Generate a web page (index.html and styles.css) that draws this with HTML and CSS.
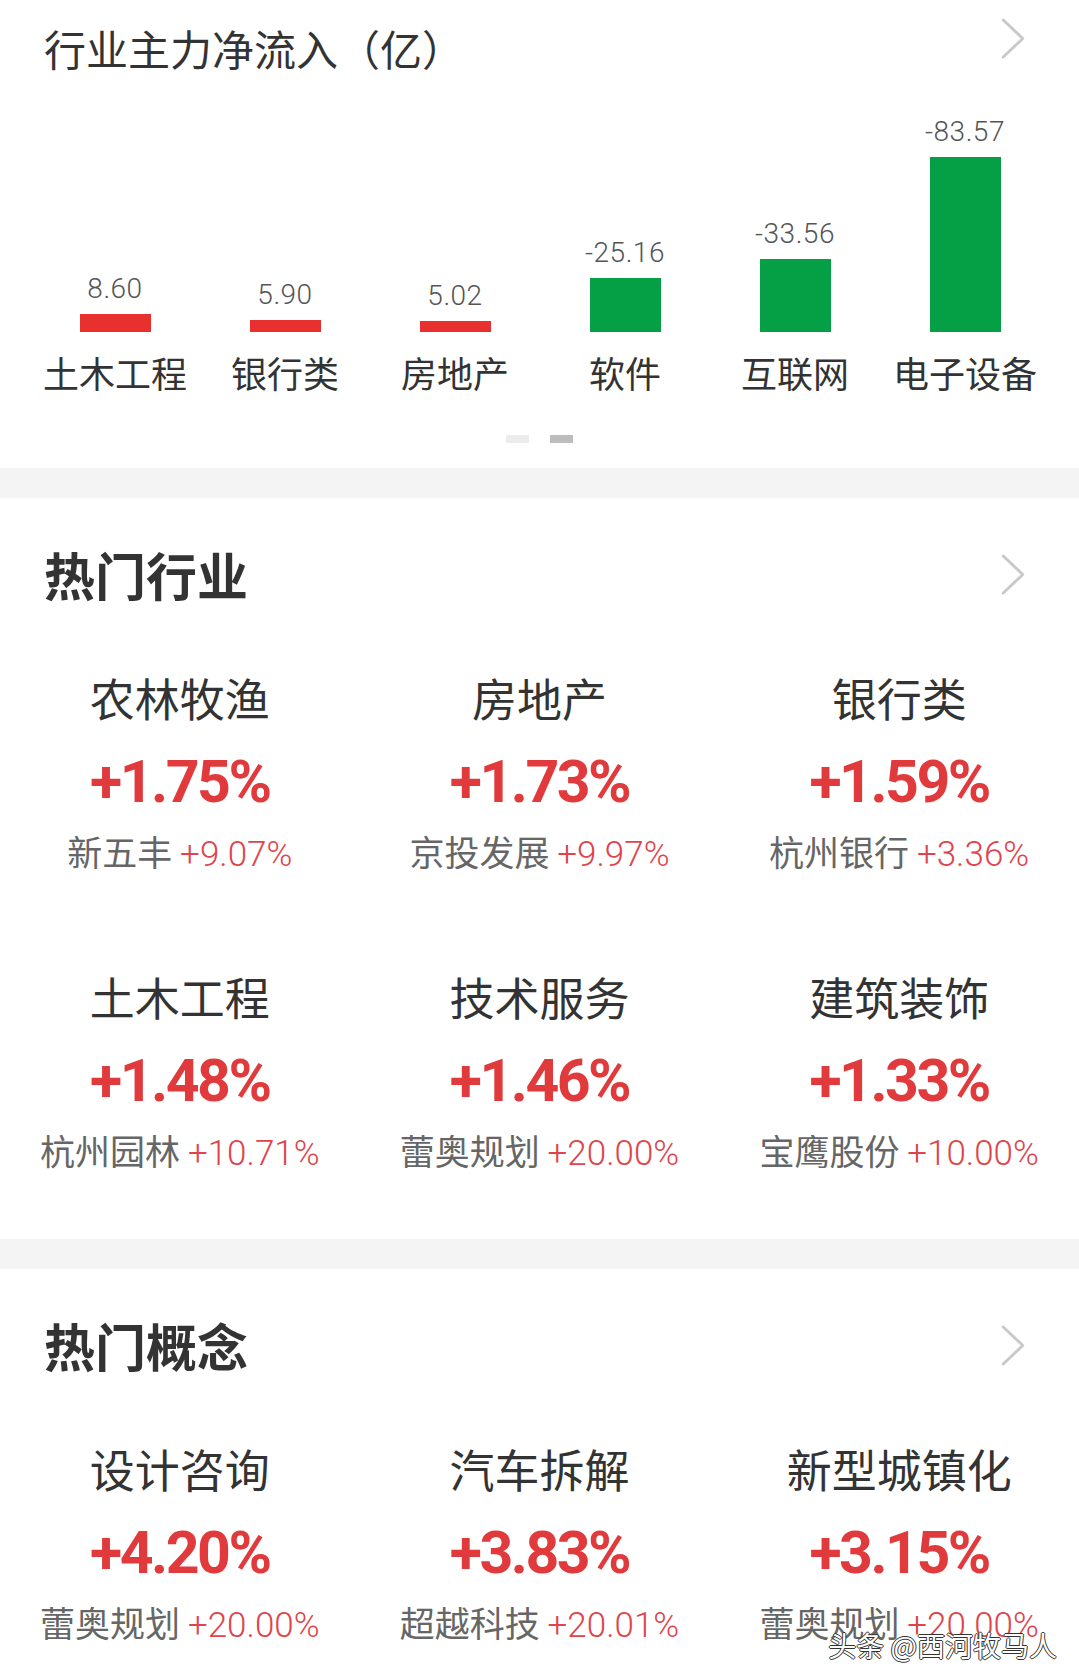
FILE: index.html
```html
<!DOCTYPE html>
<html lang="zh-CN">
<head>
    <meta charset="UTF-8">
    <meta name="viewport" content="width=device-width, initial-scale=1.0">
    <title>行业资金</title>
    <link rel="stylesheet" href="styles.css">
</head>
<body>

    <section class="card flow">
        <div class="card-head">
            <h2 class="flow-title">行业主力净流入（亿）</h2>
            <svg class="more" viewBox="0 0 24 42"><polyline points="2,2 22,21 2,40"/></svg>
        </div>
        <div class="chart">
            <div class="col">
                <span class="val">8.60</span>
                <div class="bar in" style="height:18px"></div>
                <span class="label">土木工程</span>
            </div>
            <div class="col">
                <span class="val">5.90</span>
                <div class="bar in" style="height:12px"></div>
                <span class="label">银行类</span>
            </div>
            <div class="col">
                <span class="val">5.02</span>
                <div class="bar in" style="height:11px"></div>
                <span class="label">房地产</span>
            </div>
            <div class="col">
                <span class="val">-25.16</span>
                <div class="bar out" style="height:54px"></div>
                <span class="label">软件</span>
            </div>
            <div class="col">
                <span class="val">-33.56</span>
                <div class="bar out" style="height:73px"></div>
                <span class="label">互联网</span>
            </div>
            <div class="col">
                <span class="val">-83.57</span>
                <div class="bar out" style="height:175px"></div>
                <span class="label">电子设备</span>
            </div>
        </div>
        <div class="dots"><i></i><i class="on"></i></div>
    </section>

    <div class="divider"></div>

    <section class="card hot">
        <div class="card-head">
            <h2 class="hot-title">热门行业</h2>
            <svg class="more" viewBox="0 0 24 42"><polyline points="2,2 22,21 2,40"/></svg>
        </div>
        <div class="hot-grid">
            <div class="item">
                <div class="item-name">农林牧渔</div>
                <div class="item-pct">+1.75%</div>
                <div class="item-lead">新五丰 <span class="up">+9.07%</span></div>
            </div>
            <div class="item">
                <div class="item-name">房地产</div>
                <div class="item-pct">+1.73%</div>
                <div class="item-lead">京投发展 <span class="up">+9.97%</span></div>
            </div>
            <div class="item">
                <div class="item-name">银行类</div>
                <div class="item-pct">+1.59%</div>
                <div class="item-lead">杭州银行 <span class="up">+3.36%</span></div>
            </div>
            <div class="item">
                <div class="item-name">土木工程</div>
                <div class="item-pct">+1.48%</div>
                <div class="item-lead">杭州园林 <span class="up">+10.71%</span></div>
            </div>
            <div class="item">
                <div class="item-name">技术服务</div>
                <div class="item-pct">+1.46%</div>
                <div class="item-lead">蕾奥规划 <span class="up">+20.00%</span></div>
            </div>
            <div class="item">
                <div class="item-name">建筑装饰</div>
                <div class="item-pct">+1.33%</div>
                <div class="item-lead">宝鹰股份 <span class="up">+10.00%</span></div>
            </div>
        </div>
    </section>

    <div class="divider"></div>

    <section class="card hot last">
        <div class="card-head">
            <h2 class="hot-title">热门概念</h2>
            <svg class="more" viewBox="0 0 24 42"><polyline points="2,2 22,21 2,40"/></svg>
        </div>
        <div class="hot-grid">
            <div class="item">
                <div class="item-name">设计咨询</div>
                <div class="item-pct">+4.20%</div>
                <div class="item-lead">蕾奥规划 <span class="up">+20.00%</span></div>
            </div>
            <div class="item">
                <div class="item-name">汽车拆解</div>
                <div class="item-pct">+3.83%</div>
                <div class="item-lead">超越科技 <span class="up">+20.01%</span></div>
            </div>
            <div class="item">
                <div class="item-name">新型城镇化</div>
                <div class="item-pct">+3.15%</div>
                <div class="item-lead">蕾奥规划 <span class="up">+20.00%</span></div>
            </div>
        </div>
        <span class="mark">头条 @西河牧马人</span>
    </section>

</body>
</html>
```

FILE: styles.css
```css
body {
    margin: 0;
    font-family: "Noto Sans CJK SC", sans-serif;
    color: #333;
    background: #fff;
}
.card-head {
    display: flex;
    justify-content: space-between;
    padding: 0 54px 0 44px;
}
.more {
    width: 24px;
    height: 41px;
    fill: none;
    stroke: #c9c9c9;
    stroke-width: 3;
    stroke-linecap: round;
    stroke-linejoin: round;
}

/* net inflow chart */
.flow {
    padding-top: 18px;
}
.flow .card-head {
    align-items: flex-start;
}
.flow-title {
    margin: 9px 0 0;
    font-size: 42px;
    font-weight: 400;
    line-height: 1;
    color: #333;
}
.chart {
    display: grid;
    grid-template-columns: repeat(6, 1fr);
    align-items: end;
    padding: 0 29px 0 30px;
    margin-top: 49px;
}
.col {
    display: flex;
    flex-direction: column;
    align-items: center;
}
.val {
    font-family: Roboto, sans-serif;
    font-size: 28px;
    font-weight: 300;
    line-height: 1;
    letter-spacing: 0.5px;
    color: #555;
    margin-bottom: 11px;
}
.bar {
    width: 71px;
}
.bar.in {
    background-color: #e8312f;
}
.bar.out {
    background-color: #05a045;
}
.label {
    font-size: 36px;
    line-height: 1;
    margin-top: 22px;
    color: #333;
}
.dots {
    display: flex;
    justify-content: center;
    gap: 21px;
    margin-top: 45px;
    padding-bottom: 25px;
}
.dots i {
    width: 23px;
    height: 8px;
    background-color: #ececec;
}
.dots i.on {
    background-color: #bdbdbd;
}
.divider {
    height: 30px;
    background-color: #f4f4f5;
}

/* hot lists */
.hot {
    padding: 51px 0 68px;
}
.hot .card-head {
    align-items: center;
}
.hot-title {
    margin: 0;
    font-size: 51px;
    font-weight: 700;
    line-height: 1;
    color: #333;
}
.hot-grid {
    display: grid;
    grid-template-columns: repeat(3, 1fr);
    row-gap: 102px;
    margin-top: 75px;
    text-align: center;
}
.item-name {
    font-size: 45px;
    line-height: 1;
    color: #333;
}
.item-pct {
    font-family: Roboto, sans-serif;
    font-size: 59px;
    font-weight: 700;
    line-height: 1;
    letter-spacing: -2.5px;
    color: #e03a3c;
    margin-top: 32px;
}
.item-lead {
    font-size: 35px;
    line-height: 1;
    color: #666;
    margin-top: 22px;
}
.item-lead .up {
    font-family: Roboto, sans-serif;
    font-weight: 300;
    color: #e0444a;
}
.hot.last {
    position: relative;
    padding-bottom: 40px;
}
.mark {
    position: absolute;
    right: 22px;
    bottom: 24px;
    font-size: 28px;
    line-height: 1;
    color: #fff;
    text-shadow: -1px 0 #333, 1px 0 #333, 0 -1px #333, 0 1px #333;
}
```
